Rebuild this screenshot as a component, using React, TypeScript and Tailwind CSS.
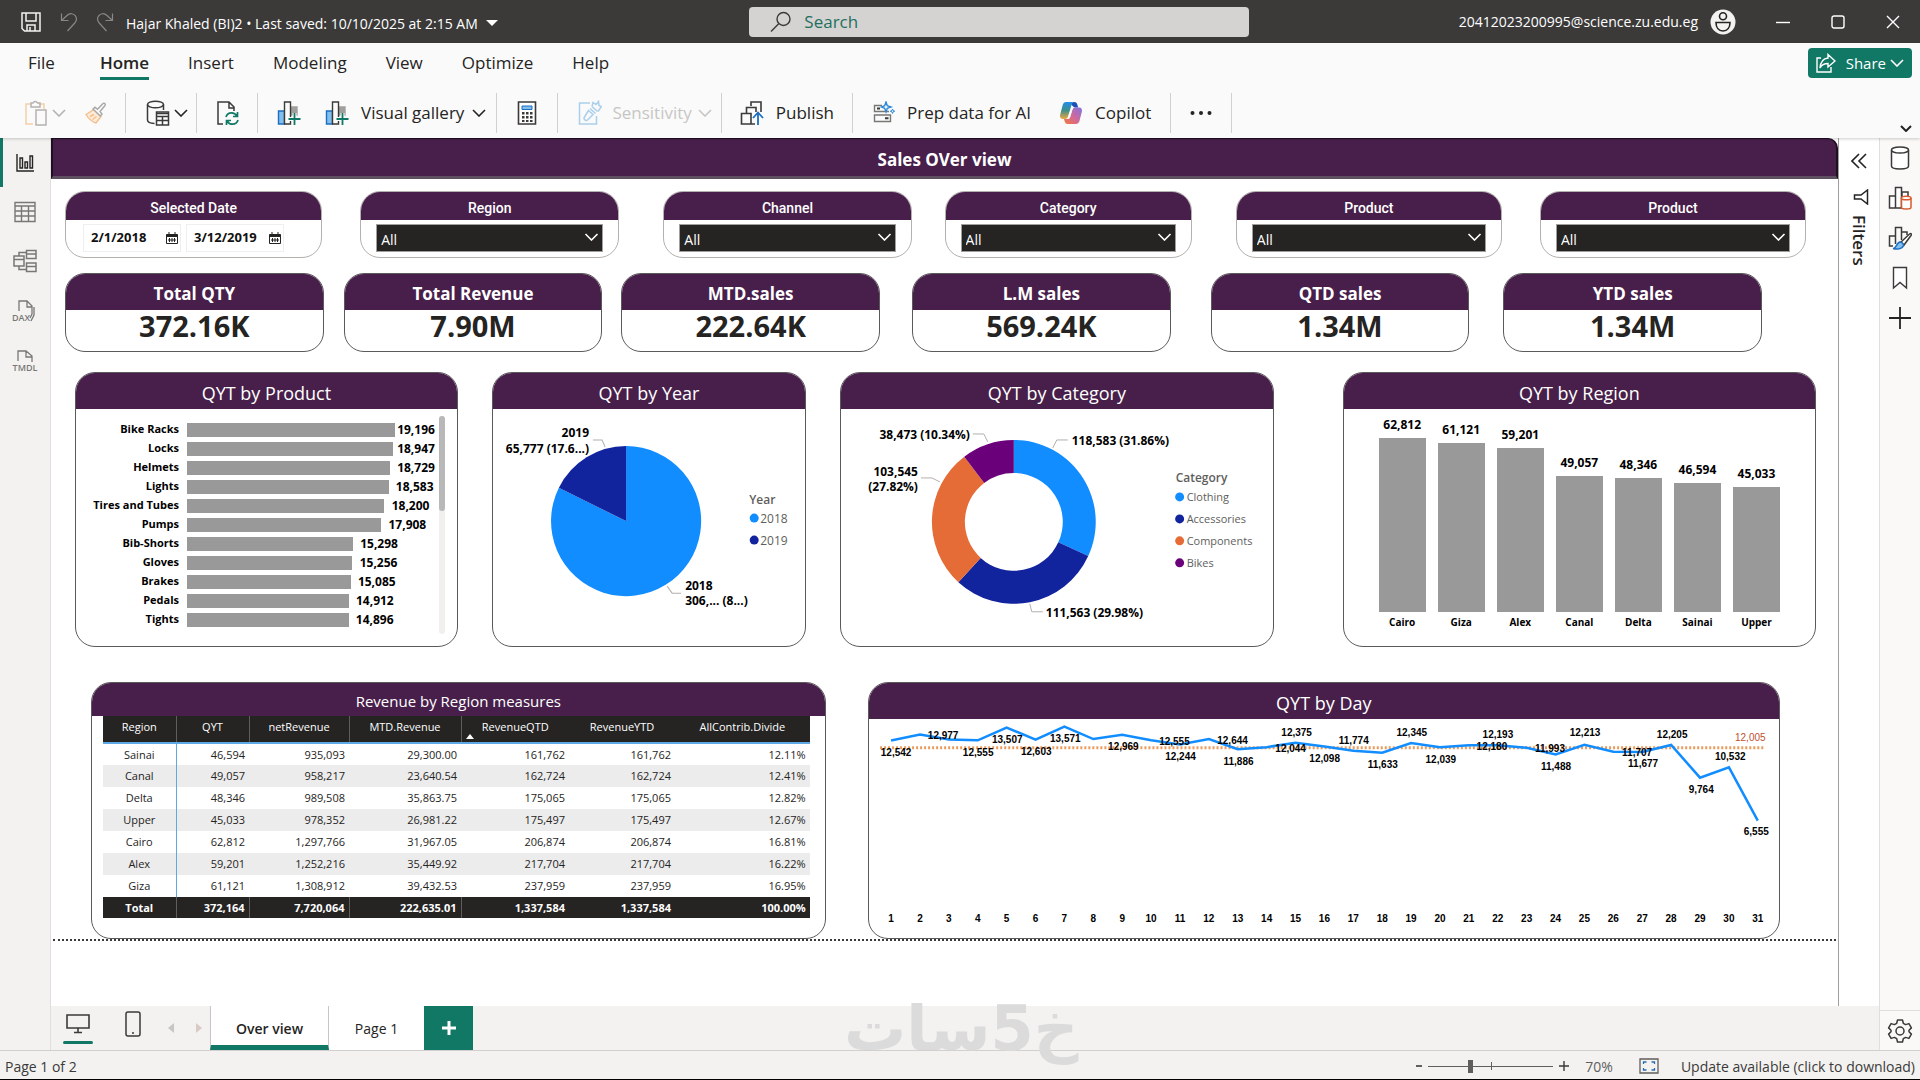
import React from 'react';

type IconProps = { className?: string };

const slicers = [
  { id: 'region', title: 'Region', box: 'flex-[259] ml-[38px]' },
  { id: 'channel', title: 'Channel', box: 'flex-[248] ml-[44px]' },
  { id: 'category', title: 'Category', box: 'flex-[247] ml-[33px]' },
  { id: 'product', title: 'Product', box: 'flex-[266] ml-[44px]' },
  { id: 'product-2', title: 'Product', box: 'flex-[266] ml-[38px]' },
];

const kpis = [
  { title: 'Total QTY', value: '372.16K', box: 'flex-1' },
  { title: 'Total Revenue', value: '7.90M', box: 'flex-1 ml-[20px]' },
  { title: 'MTD.sales', value: '222.64K', box: 'flex-1 ml-[19px]' },
  { title: 'L.M sales', value: '569.24K', box: 'flex-1 ml-[32px]' },
  { title: 'QTD sales', value: '1.34M', box: 'flex-1 ml-[40px]' },
  { title: 'YTD sales', value: '1.34M', box: 'flex-1 ml-[34px]' },
];

const products = [
  { name: 'Bike Racks', qty: 19196 },
  { name: 'Locks', qty: 18947 },
  { name: 'Helmets', qty: 18729 },
  { name: 'Lights', qty: 18583 },
  { name: 'Tires and Tubes', qty: 18200 },
  { name: 'Pumps', qty: 17908 },
  { name: 'Bib-Shorts', qty: 15298 },
  { name: 'Gloves', qty: 15256 },
  { name: 'Brakes', qty: 15085 },
  { name: 'Pedals', qty: 14912 },
  { name: 'Tights', qty: 14896 },
];

const regions = [
  { name: 'Cairo', qty: 62812 },
  { name: 'Giza', qty: 61121 },
  { name: 'Alex', qty: 59201 },
  { name: 'Canal', qty: 49057 },
  { name: 'Delta', qty: 48346 },
  { name: 'Sainai', qty: 46594 },
  { name: 'Upper', qty: 45033 },
];

const columns = ['Region', 'QYT', 'netRevenue', 'MTD.Revenue', 'RevenueQTD', 'RevenueYTD', 'AllContrib.Divide'];

const rows = [
  ['Sainai', '46,594', '935,093', '29,300.00', '161,762', '161,762', '12.11%'],
  ['Canal', '49,057', '958,217', '23,640.54', '162,724', '162,724', '12.41%'],
  ['Delta', '48,346', '989,508', '35,863.75', '175,065', '175,065', '12.82%'],
  ['Upper', '45,033', '978,352', '26,981.22', '175,497', '175,497', '12.67%'],
  ['Cairo', '62,812', '1,297,766', '31,967.05', '206,874', '206,874', '16.81%'],
  ['Alex', '59,201', '1,252,216', '35,449.92', '217,704', '217,704', '16.22%'],
  ['Giza', '61,121', '1,308,912', '39,432.53', '237,959', '237,959', '16.95%'],
];

const total = ['Total', '372,164', '7,720,064', '222,635.01', '1,337,584', '1,337,584', '100.00%'];

const days = [
  12542, 12977, 12620, 12555, 13507, 12603, 13571, 12650, 12969, 12555, 12244, 12644, 11886, 12044, 12375, 12098,
  11774, 11633, 12345, 12039, 12180, 12193, 11993, 11488, 12213, 11707, 11677, 12205, 9764, 10532, 6555,
];

// value, x, y
const dayLabels: [number, number, number][] = [
  [12542, 27, 34], [12977, 74, 17], [12555, 109, 34], [13507, 138, 21], [12603, 167, 33], [13571, 196, 20],
  [12969, 254, 28], [12555, 305, 23], [12244, 311, 38], [12644, 363, 22], [11886, 369, 43], [12375, 427, 14],
  [12044, 421, 30], [12098, 455, 40], [11774, 484, 22], [11633, 513, 46], [12345, 542, 14], [12039, 571, 41],
  [12180, 622, 28], [12193, 628, 16], [11993, 680, 30], [11488, 686, 48], [12213, 715, 14], [11707, 767, 34],
  [11677, 773, 45], [12205, 802, 16], [9764, 831, 71], [10532, 860, 38], [6555, 886, 113],
];

const fmt = (n: number) => n.toLocaleString('en-US');

/* ---------- icons ---------- */

const Chevron = ({ className = 'w-[14px] h-[8px]' }: IconProps) => (
  <svg viewBox="0 0 14 8" className={className} fill="none" stroke="currentColor" strokeWidth="1.6">
    <path d="M1 1l6 6 6-6" />
  </svg>
);

const SaveIcon = () => (
  <svg viewBox="0 0 20 20" className="w-5 h-5" fill="none" stroke="#f3f2f1" strokeWidth="1.5">
    <path d="M1 1h18v18H3.500L1 16.500zM5 1v8h10V1M6 19v-6h8v6M9 15v4" />
  </svg>
);

const UndoIcon = ({ className = '' }: IconProps) => (
  <svg viewBox="0 0 18 20" className={`w-[18px] h-5 ${className}`} fill="none" stroke="#8a8886" strokeWidth="1.2">
    <path d="M1.500 1.500v7h7M1.500 8.500L7 3.500c3-2.800 6.500-2 8.200.2 1.700 2.200 1.600 5-.4 7.300L7.500 19" />
  </svg>
);

const PasteIcon = () => (
  <svg viewBox="0 0 24 26" className="w-6 h-[26px]" fill="none" strokeWidth="1.5">
    <path d="M7 4H2v20h7M15 4h5v5" stroke="#f3cfa8" />
    <path d="M7 3h2a2.500 2.500 0 0 1 4.500 0H16v4H7z" stroke="#b5b3b1" />
    <path d="M12 10h10v15H12z" stroke="#b5b3b1" fill="#fafafa" />
  </svg>
);

const BrushIcon = () => (
  <svg viewBox="0 0 24 24" className="w-6 h-6" fill="none" strokeWidth="1.4">
    <path d="M3 13.500l8-5 7 7-5 6.500c-3-1-7-3.500-10-8.500z" fill="#fdebd6" stroke="#f3bf8d" />
    <path d="M7 15.500l4-2M9.500 18.500l4-3" stroke="#f3bf8d" />
    <path d="M10 8l2-1.800 2.500 2L20 2.500c1.200-1 3 .6 2 2L17 10.500l2 2.700-1.800 1.800z" fill="#fafafa" stroke="#a9a7a5" />
  </svg>
);

const DataIcon = () => (
  <svg viewBox="0 0 24 26" className="w-6 h-[26px]" fill="none" stroke="#3b3a39" strokeWidth="1.5">
    <ellipse cx="9.500" cy="4.500" rx="8" ry="3.300" />
    <path d="M1.500 4.500V20c0 2 3 3.300 7 3.500M17.500 4.500V10" />
    <path d="M10.500 12h12v13h-12z" fill="#fff" />
    <path d="M10.500 13.500h12M10.500 16.500h12M10.500 20.500h12M16.500 16v9" />
  </svg>
);

const RefreshFileIcon = () => (
  <svg viewBox="0 0 24 26" className="w-6 h-[26px]" fill="none" strokeWidth="1.5">
    <path d="M7 24H2V2h11l5 5v4M13 2v6h5" stroke="#3b3a39" />
    <path d="M10 17c.8-3 3-4.200 5.500-4.200 2.300 0 4.300 1.200 5.500 3.200M21.500 12v4.500H17M22 20c-.8 3-3 4.200-5.500 4.200-2.300 0-4.300-1.200-5.500-3.200M10.500 25v-4.500H15" stroke="#117865" strokeWidth="1.700" />
  </svg>
);

const NewVisualIcon = () => (
  <svg viewBox="0 0 24 26" className="w-6 h-[26px]" fill="none" strokeWidth="1.4">
    <path d="M1.500 11h6v13h-6z" fill="#83beec" stroke="#1b6ec2" />
    <path d="M14 7h6v8h-6z" fill="#a19f9d" stroke="#a19f9d" />
    <path d="M7.500 2h6v22h-6z" fill="#fafafa" stroke="#3b3a39" />
    <path d="M17.500 13v12M11.500 19h12" stroke="#fafafa" strokeWidth="4" />
    <path d="M17.500 13v12M11.500 19h12" stroke="#117865" strokeWidth="1.800" />
  </svg>
);

const CalcIcon = () => (
  <svg viewBox="0 0 20 26" className="w-5 h-[26px]">
    <path d="M1.500 2h17v22h-17z" fill="#fff" stroke="#3b3a39" strokeWidth="1.600" />
    <path d="M5 6h10v3.500H5z" fill="#83beec" stroke="#1b6ec2" />
    <path d="M5 12h2.500v2.500H5zM9 12h2.500v2.500H9zM13 12h2.500v2.500H13zM5 16h2.500v2.500H5zM9 16h2.500v2.500H9zM13 16h2.500v2.500H13zM5 20h2.500v2H5zM9 20h2.500v2H9zM13 20h2.500v2H13z" fill="#3b3a39" />
  </svg>
);

const SensitivityIcon = () => (
  <svg viewBox="0 0 24 26" className="w-6 h-[26px]" fill="none" stroke="#a9cfec" strokeWidth="1.500">
    <path d="M12 3H1.500v21h17v-8" />
    <path d="M10.500 10.500l4.500 4-5.500 5.500c-2 1.500-4.500-1-3-3zM12 8.500l5.500 5M14 6.500l5.500 5M14 6.500l1-4 3 2 2.500-3 .5 4 2.500 1-3.500 5" />
  </svg>
);

const PublishIcon = () => (
  <svg viewBox="0 0 24 26" className="w-6 h-[26px]" fill="none" stroke="#3b3a39" strokeWidth="1.600">
    <path d="M11 6V2h10v10M6.500 13V7.500H16V12M1.500 13.500H11V24H1.500zM11 24h4" />
    <path d="M18 25V13M13 18l5-5.500 5 5.500" stroke="#1b6ec2" strokeWidth="1.800" />
  </svg>
);

const PrepIcon = () => (
  <svg viewBox="0 0 22 24" className="w-[22px] h-6" fill="none" strokeWidth="1.400">
    <path d="M9 4.500H1.500v6H16M1.500 14h16v6.500h-16z" stroke="#797775" />
    <path d="M4 7.500h3M12 17.300h3.500" stroke="#3b3a39" strokeWidth="2" />
    <path d="M13 1l1.300 3.700L18 6l-3.700 1.300L13 11l-1.300-3.700L8.500 6l3.200-1.300z" stroke="#2b88d8" fill="#fafafa" />
    <path d="M19.500 8l.6 1.600 1.600.6-1.600.6-.6 1.600-.6-1.600-1.600-.6 1.600-.6z" stroke="#2b88d8" strokeWidth="1" />
  </svg>
);

const CopilotIcon = () => (
  <svg viewBox="0 0 24 24" className="w-6 h-6">
    <defs>
      <linearGradient id="cp-a" x1="0" y1="0" x2="0" y2="1">
        <stop offset="0" stopColor="#1f8de8" />
        <stop offset=".5" stopColor="#3f8f8a" />
        <stop offset="1" stopColor="#f0a83c" />
      </linearGradient>
      <linearGradient id="cp-b" x1="1" y1="0" x2="0" y2="1">
        <stop offset="0" stopColor="#7f74e0" />
        <stop offset=".5" stopColor="#d0689c" />
        <stop offset="1" stopColor="#f4793b" />
      </linearGradient>
    </defs>
    <path d="M15 1h.5c1.500 0 2.300 1 2.800 2.500l.9 3h-4l-3-3C12.500 2 13.500 1 15 1z" fill="#1d4fb8" />
    <path d="M17 23H8.500c-1.500 0-2.300-1-2.800-2.500L5 18h3.500c1.500 0 2.300-.8 2.800-2.500l2-6.500c.5-1.800 1.500-2.500 3-2.500H20c2.500 0 3.500 2 2.800 4.500l-2.500 9.500C19.700 22 18.500 23 17 23z" fill="url(#cp-b)" />
    <path d="M7 1h8.500c-1.500 0-2.300 1-2.800 2.500L9 15.500c-.5 1.800-1.500 2.500-3 2.500H4c-2.500 0-3.500-2-2.800-4.500l2.500-9.500C4.300 2 5.500 1 7 1z" fill="url(#cp-a)" />
    <path d="M12.500 6.500h3.200c-1.300 0-2 .9-2.400 2.500l-2 6.500c-.5 1.700-1.300 2.500-2.800 2.500H7.300c1-.4 1.500-1.300 1.900-2.500z" fill="#fafafa" />
  </svg>
);

const CalendarIcon = () => (
  <svg viewBox="0 0 12 12" className="w-3 h-3" fill="none" stroke="#252423">
    <path d="M.5 2.500h11v9H.5zM3 0v3M9 0v3M.5 4.500h11M3.500 6v4M6 6v4M8.500 6v4M2 8h8" />
    <path d="M.5 3.500h11" strokeWidth="2" />
  </svg>
);

/* ---------- pieces ---------- */

const Divider = () => <span className="w-px h-10 bg-[#d2d0ce]" />;

function TitleBar() {
  return (
    <header className="flex items-center h-[43px] bg-[#3b3a39] text-white">
      <div className="flex items-center flex-[750] pl-[21px]">
        <button aria-label="Save"><SaveIcon /></button>
        <button aria-label="Undo" className="ml-[19px]"><UndoIcon /></button>
        <button aria-label="Redo" className="ml-[18px]"><UndoIcon className="-scale-x-100" /></button>
        <button className="flex items-center gap-2 ml-3 pt-[3px] text-[14px] whitespace-nowrap">
          Hajar Khaled (BI)2 • Last saved: 10/10/2025 at 2:15 AM
          <svg viewBox="0 0 12 6" className="w-3 h-[6px]" fill="#fff"><path d="M0 0h12L6 6z" /></svg>
        </button>
      </div>
      <label className="flex items-center w-[500px] h-[30px] pl-[21px] gap-3 rounded-sm bg-[#d4d3d1]">
        <svg viewBox="0 0 22 22" className="w-[22px] h-[22px]" fill="none" stroke="#3b3a39" strokeWidth="1.4">
          <circle cx="13.500" cy="8" r="6.500" />
          <path d="M8.700 12.700L1 20.500" />
        </svg>
        <input type="text" aria-label="Search" placeholder="Search" className="flex-1 text-[17px] bg-transparent outline-none placeholder:text-[#1f6f5f] placeholder:opacity-100" />
      </label>
      <div className="flex items-center justify-end flex-[670] pr-[20px]">
        <span className="text-[14px]">20412023200995@science.zu.edu.eg</span>
        <svg viewBox="0 0 26 26" className="w-[26px] h-[26px] ml-3" fill="none" stroke="#252423" strokeWidth="1.600">
          <circle cx="13" cy="13" r="12.500" fill="#f3f2f1" stroke="none" />
          <circle cx="13" cy="7.300" r="3.500" />
          <path d="M6 13.500h14c0 5-2.500 8.500-7 8.500s-7-3.500-7-8.500z" />
        </svg>
        <button aria-label="Minimize" className="ml-10">
          <svg viewBox="0 0 14 14" className="w-[14px] h-[14px]" stroke="#fff" strokeWidth="1.400"><path d="M0 7.500h14" /></svg>
        </button>
        <button aria-label="Maximize" className="ml-[41px]">
          <svg viewBox="0 0 14 14" className="w-[14px] h-[14px]" fill="none" stroke="#fff" strokeWidth="1.400"><rect x="1" y="1" width="12" height="12" rx="2" /></svg>
        </button>
        <button aria-label="Close" className="ml-[41px]">
          <svg viewBox="0 0 14 14" className="w-[14px] h-[14px]" stroke="#fff" strokeWidth="1.400"><path d="M1 1l12 12M13 1L1 13" /></svg>
        </button>
      </div>
    </header>
  );
}

function Ribbon() {
  return (
    <div className="relative z-10 bg-[#fafafa] shadow-[0_1px_3px_rgba(0,0,0,0.2)]">
      <nav className="flex items-center justify-between h-10 pl-7 pr-2 text-[17px] text-[#252423]">
        <div className="flex gap-[39px]">
          <a href="#file" className="mr-[6px]">File</a>
          <a href="#home" className="relative font-semibold after:absolute after:inset-x-0 after:-bottom-1 after:h-[3px] after:bg-[#117865]">Home</a>
          <a href="#insert">Insert</a>
          <a href="#modeling">Modeling</a>
          <a href="#view">View</a>
          <a href="#optimize">Optimize</a>
          <a href="#help">Help</a>
        </div>
        <button className="flex items-center h-[30px] gap-1 px-2 rounded-[4px] bg-[#117865] text-white text-[15px]">
          <svg viewBox="0 0 20 20" className="w-5 h-5 mr-[6px]" fill="none" stroke="#fff" strokeWidth="1.400">
            <path d="M5 5H1v14h14v-5M12 5V1.500l7 6.500-7 6V10.500c-4 0-6.500 1.500-8 4.500.5-6 3.500-9.500 8-10z" />
          </svg>
          Share
          <Chevron />
        </button>
      </nav>
      <div className="flex items-center justify-between h-[55px] pr-2 pl-6 text-[17px] text-[#252423]">
        <div className="flex items-center h-10 mt-[5px] whitespace-nowrap">
          <button aria-label="Paste" className="flex items-center gap-1 text-[#b5b3b1]"><PasteIcon /><Chevron /></button>
          <button aria-label="Format painter" className="ml-[17px] mr-[18px]"><BrushIcon /></button>
          <Divider />
          <button aria-label="Get data" className="flex items-center gap-1 ml-5 mr-2"><DataIcon /><Chevron /></button>
          <Divider />
          <button aria-label="Refresh" className="ml-[19px] mr-[17px]"><RefreshFileIcon /></button>
          <Divider />
          <button aria-label="New visual" className="ml-[19px] mr-6"><NewVisualIcon /></button>
          <button className="flex items-center gap-3 mr-[10px]"><NewVisualIcon />Visual gallery<Chevron className="w-[14px] h-[8px] -ml-1" /></button>
          <Divider />
          <button aria-label="Quick measure" className="mx-5"><CalcIcon /></button>
          <Divider />
          <button className="flex items-center gap-[10px] ml-5 mr-[9px] text-[#c8c6c4]"><SensitivityIcon />Sensitivity<Chevron className="w-[14px] h-[8px] -ml-1" /></button>
          <Divider />
          <button className="flex items-center gap-3 mx-[18px]"><PublishIcon />Publish</button>
          <Divider />
          <button className="flex items-center gap-3 ml-5 mr-7"><PrepIcon />Prep data for AI</button>
          <button className="flex items-center gap-3 mr-[19px]"><CopilotIcon />Copilot</button>
          <Divider />
          <button aria-label="More options" className="mx-[19px]">
            <svg viewBox="0 0 22 6" className="w-[22px] h-[6px]" fill="#252423"><circle cx="2.500" cy="3" r="2" /><circle cx="11" cy="3" r="2" /><circle cx="19.500" cy="3" r="2" /></svg>
          </button>
          <Divider />
        </div>
        <button aria-label="Collapse ribbon" className="self-end mb-[6px]">
          <svg viewBox="0 0 12 7" className="w-3 h-[7px]" fill="none" stroke="#252423" strokeWidth="2"><path d="M1 1l5 5 5-5" /></svg>
        </button>
      </div>
    </div>
  );
}

function ViewRail() {
  return (
    <aside className="flex flex-col w-[51px] border-r border-[#e1dfdd] bg-[#f3f2f1]">
      <button aria-label="Report view" className="flex items-center justify-center h-[49px] pr-1 border-l-[3px] border-[#117865]">
        <svg viewBox="0 0 18 18" className="w-[18px] h-[18px]" fill="none" stroke="#252423" strokeWidth="1.400">
          <path d="M1 0v17h17M4 4h2.500v10H4zM9 8h2.500v6H9zM14 2h2.500v12H14z" />
        </svg>
      </button>
      <button aria-label="Table view" className="flex items-center justify-center h-[49px]">
        <svg viewBox="0 0 22 22" className="w-[22px] h-[22px]" fill="none" stroke="#797775" strokeWidth="1.400">
          <path d="M1 1.500h20v19H1zM1 5h20M1 10h20M1 15h20M7.500 5v15.500M14.500 5v15.500" />
        </svg>
      </button>
      <button aria-label="Model view" className="flex items-center justify-center h-[50px]">
        <svg viewBox="0 0 24 24" className="w-6 h-6" fill="none" stroke="#797775" strokeWidth="1.500">
          <path d="M1 7h10v10H1zM1 10.500h10M13.500 1.500H23v8h-9.500zM13.500 5H23M13.500 14H23v8.500h-9.500zM13.500 17.500H23M6 7V3.500h7.500M6 17v3.500h7.500" />
        </svg>
      </button>
      <button aria-label="DAX query view" className="flex items-center justify-center h-[50px]">
        <svg viewBox="0 0 26 24" className="w-[26px] h-6" fill="none" stroke="#797775" strokeWidth="1.300">
          <path d="M7 12V2h8l5 5v8l-2 4M15 2v6h5M22 8v8l-3 6" />
          <text x="0" y="22" fontSize="9" fontFamily="Open Sans" fontWeight="600" fill="#797775" stroke="none">DAX</text>
        </svg>
      </button>
      <button aria-label="TMDL view" className="flex items-center justify-center h-[50px]">
        <svg viewBox="0 0 26 24" className="w-[26px] h-6" fill="none" stroke="#797775" strokeWidth="1.300">
          <path d="M6 12V2h8l6 5v6M14 2v6h6" />
          <text x="13" y="22" textAnchor="middle" fontSize="9" fontFamily="Open Sans" fontWeight="600" fill="#797775" stroke="none">TMDL</text>
        </svg>
      </button>
    </aside>
  );
}

function Card({ title, box, head = 'h-[36px] pt-1 text-[18px]', children }: { title: string; box: string; head?: string; children: React.ReactNode }) {
  return (
    <section className={`overflow-hidden rounded-[20px] border border-[#5a5a5a] bg-white ${box}`}>
      <h2 className={`flex items-center justify-center bg-[#481f4b] text-white ${head}`}>{title}</h2>
      {children}
    </section>
  );
}

function Slicers() {
  return (
    <div className="flex pl-[14px] pr-8 mt-3">
      <section className="flex-[257] h-[67px] overflow-hidden rounded-[20px] border border-[#b3b0ad] bg-white">
        <h2 className="flex items-center justify-center h-[28px] pt-1 bg-[#481f4b] text-white text-[14px] font-medium font-['Roboto',sans-serif]">Selected Date</h2>
        <div className="flex gap-[5px] pl-[17px] mt-1">
          {['2/1/2018', '3/12/2019'].map((d, i) => (
            <label key={d} className="flex items-center w-[98px] h-7 border border-[#f0efee]">
              <input type="text" aria-label={i ? 'End date' : 'Start date'} defaultValue={d} className="w-[74px] pl-[7px] mr-2 text-[13px] font-bold text-[#111] bg-transparent outline-none" />
              <CalendarIcon />
            </label>
          ))}
        </div>
      </section>
      {slicers.map((s) => (
        <section key={s.id} className={`h-[67px] overflow-hidden rounded-[20px] border border-[#b3b0ad] bg-white ${s.box}`}>
          <h2 className="flex items-center justify-center h-[28px] pt-1 bg-[#481f4b] text-white text-[14px] font-medium font-['Roboto',sans-serif]">
            <label htmlFor={s.id}>{s.title}</label>
          </h2>
          <div className="relative mx-[15px] mt-1 text-white">
            <select id={s.id} className="block w-full h-7 pl-1 pt-[2px] text-[14px] appearance-none border border-[#a19f9d] bg-[#252423] outline-none">
              <option>All</option>
            </select>
            <Chevron className="absolute right-1 top-[9px] w-[15px] h-[8px] pointer-events-none" />
          </div>
        </section>
      ))}
    </div>
  );
}

function ProductChart() {
  return (
    <div className="flex pl-[7px] pr-3 pt-[7px]">
      <ul className="flex-1 pt-1 text-[11px] font-bold text-black">
        {products.map((p) => (
          <li key={p.name} className="flex items-center h-[19px]">
            <span className="w-24 pr-2 shrink-0 text-right whitespace-nowrap box-content">{p.name}</span>
            <span className="flex items-center flex-1">
              <span className="h-[14px] shrink-0 bg-[#999999]" style={{ width: `${(p.qty / 19196) * 84}%` }} />
              <span className="flex-1 max-w-[45px] text-right text-[12px]">{fmt(p.qty)}</span>
            </span>
          </li>
        ))}
      </ul>
      <div className="w-[6px] h-[218px] ml-1 rounded-full bg-[#f1f0ef]">
        <div className="h-[95px] rounded-full bg-[#b8b8b8]" />
      </div>
    </div>
  );
}

// ring or pie slice, from and to are shares of the whole turn
function slice(cx: number, cy: number, r: number, inner: number, from: number, to: number) {
  const at = (rad: number, t: number) => {
    const a = t * 2 * Math.PI;
    return `${(cx + rad * Math.sin(a)).toFixed(2)} ${(cy - rad * Math.cos(a)).toFixed(2)}`;
  };
  const large = to - from > 0.5 ? 1 : 0;
  return `M${at(r, from)}A${r} ${r} 0 ${large} 1 ${at(r, to)}L${at(inner, to)}A${inner} ${inner} 0 ${large} 0 ${at(inner, from)}Z`;
}

function YearChart() {
  return (
    <svg viewBox="0 0 312 236" className="block w-full font-bold text-[12px]">
      <path d={slice(133, 112, 75, 0, 0, 0.8233)} fill="#118dff" />
      <path d={slice(133, 112, 75, 0, 0.8233, 1)} fill="#12239e" />
      <path d="M100 31h9l3 7M174 177l5 7h9" fill="none" stroke="#b3b0ad" />
      <text x="96" y="28" textAnchor="end">2019</text>
      <text x="96" y="44" textAnchor="end">65,777 (17.6...)</text>
      <text x="192" y="181">2018</text>
      <text x="192" y="196">306,... (8...)</text>
      <text x="256" y="95" fill="#605e5c" fontWeight="600">Year</text>
      <g fill="#605e5c" fontWeight="400">
        <circle cx="261" cy="109" r="4.500" fill="#118dff" />
        <text x="267" y="114">2018</text>
        <circle cx="261" cy="131" r="4.500" fill="#12239e" />
        <text x="267" y="136">2019</text>
      </g>
    </svg>
  );
}

function CategoryChart() {
  const legend = [
    ['Clothing', '#118dff'],
    ['Accessories', '#12239e'],
    ['Components', '#e66c37'],
    ['Bikes', '#6b007b'],
  ];
  const stops = [0, 0.3186, 0.6184, 0.8966, 1];
  return (
    <svg viewBox="0 0 432 236" className="block w-full font-bold text-[12px]">
      {legend.map(([name, color], i) => (
        <path key={name} d={slice(173, 113, 82, 49, stops[i], stops[i + 1])} fill={color} />
      ))}
      <path d="M132 25h11l4 8M227 31h-11l-4 8M80 69h11l8 4M189 195l2 8h11" fill="none" stroke="#b3b0ad" />
      <text x="129" y="30" textAnchor="end">38,473 (10.34%)</text>
      <text x="231" y="36">118,583 (31.86%)</text>
      <text x="77" y="67" textAnchor="end">103,545</text>
      <text x="77" y="82" textAnchor="end">(27.82%)</text>
      <text x="205" y="208">111,563 (29.98%)</text>
      <text x="335" y="73" fill="#605e5c" fontWeight="600">Category</text>
      {legend.map(([name, color], i) => (
        <g key={name} fill="#605e5c" fontWeight="400" className="text-[11px]">
          <circle cx="339" cy={88 + i * 22} r="4.500" fill={color} />
          <text x="346" y={92 + i * 22}>{name}</text>
        </g>
      ))}
    </svg>
  );
}

function RegionChart() {
  return (
    <ul className="flex items-end gap-3 h-[220px] px-[35px] text-center font-bold text-black">
      {regions.map((r) => (
        <li key={r.name} className="flex-1">
          <div className="mb-1 text-[12px] leading-[18px]">{fmt(r.qty)}</div>
          <div className="bg-[#999999]" style={{ height: `${Math.round((r.qty / 62812) * 174)}px` }} />
          <div className="mt-[3px] text-[10px] leading-[14px]">{r.name}</div>
        </li>
      ))}
    </ul>
  );
}

function RevenueTable() {
  return (
    <table className="w-[calc(100%-26px)] mx-[11px] table-fixed text-[11px] leading-4 text-[#252423]">
      <colgroup>
        <col className="w-[73px]" />
        <col className="w-[73px]" />
        <col className="w-[100px]" />
        <col className="w-[112px]" />
        <col className="w-[108px]" />
        <col className="w-[106px]" />
        <col />
      </colgroup>
      <thead>
        <tr className="h-[27px] align-top bg-[#252423] text-white border-b-2 border-[#5fa8e6]">
          {columns.map((c, i) => (
            <th key={c} className={`relative pt-[3px] font-normal ${i > 0 && i < 5 ? 'border-l border-[#605e5c]' : ''}`}>
              {c}
              {i === 4 && (
                <svg viewBox="0 0 8 5" className="absolute left-1 bottom-[3px] w-2 h-[5px]" fill="#fff"><path d="M4 0l4 5H0z" /></svg>
              )}
            </th>
          ))}
        </tr>
      </thead>
      <tbody>
        {rows.map((r) => (
          <tr key={r[0]} className="h-[22px] even:bg-[#ececec]">
            {r.map((v, i) => (
              <td key={i} className={i === 0 ? 'text-center border-r border-[#5fa8e6]' : 'text-right pr-1'}>{v}</td>
            ))}
          </tr>
        ))}
      </tbody>
      <tfoot>
        <tr className="h-[21px] bg-[#252423] text-white font-bold">
          {total.map((v, i) => (
            <td key={i} className={`${i === 0 ? 'text-center' : 'text-right pr-1'} ${i > 0 && i < 5 ? 'border-l border-[#605e5c]' : ''}`}>{v}</td>
          ))}
        </tr>
      </tfoot>
    </table>
  );
}

function DayChart() {
  const points = days.map((v, i) => `${(22 + i * 28.85).toFixed(1)},${(189 - v * 0.01336).toFixed(1)}`).join(' ');
  return (
    <svg viewBox="0 0 909 219" className="block w-full font-bold text-[10px] font-['Liberation_Sans',sans-serif]" textAnchor="middle">
      <path d="M11 28.600h884" stroke="#ec9a5c" strokeWidth="3" strokeDasharray="2 2" />
      <polyline points={points} fill="none" stroke="#118dff" strokeWidth="2.500" />
      {dayLabels.map(([v, x, y]) => (
        <text key={x} x={x} y={y + 3}>{fmt(v)}</text>
      ))}
      <text x="880" y="22" fill="#c0502f" fontWeight="400">12,005</text>
      {days.map((_, i) => (
        <text key={i} x={22 + i * 28.85} y="203">{i + 1}</text>
      ))}
    </svg>
  );
}

function Report() {
  return (
    <main className="flex flex-col flex-1 min-w-0 bg-white">
      <h1 className="flex items-center justify-center h-[41px] pt-1 border-2 border-t border-b-[3px] border-[#1c0f1e] border-b-[#5e5060] rounded-tr-[10px] bg-[#481f4b] text-white text-[17px] font-bold">Sales OVer view</h1>
      <Slicers />
      <div className="flex pl-[14px] pr-[76px] mt-[15px]">
        {kpis.map((k) => (
          <Card key={k.title} title={k.title} box={`h-[79px] ${k.box}`} head="h-[36px] pt-1 text-[17px] font-bold">
            <p className="text-center text-[29px] leading-[31px] font-bold text-[#252423]">{k.value}</p>
          </Card>
        ))}
      </div>
      <div className="flex pl-6 pr-[22px] mt-5">
        <Card title="QYT by Product" box="flex-[383] h-[275px]"><ProductChart /></Card>
        <Card title="QYT by Year" box="flex-[314] ml-[34px] h-[275px]"><YearChart /></Card>
        <Card title="QYT by Category" box="flex-[434] ml-[34px] h-[275px]"><CategoryChart /></Card>
        <Card title="QYT by Region" box="flex-[474] ml-[69px] h-[275px]"><RegionChart /></Card>
      </div>
      <div className="flex pl-[38px] pr-[56px] mx-[2px] mt-[35px] border-b-2 border-dotted border-[#3b3a39]">
        <Card title="Revenue by Region measures" box="flex-[734] h-[257px]" head="h-[33px] pt-1 text-[15px]"><RevenueTable /></Card>
        <Card title="QYT by Day" box="flex-[912] ml-[42px] h-[257px]"><DayChart /></Card>
      </div>
    </main>
  );
}

function PageTabs() {
  return (
    <div className="relative flex h-11 bg-[#f3f2f1] text-[14px] text-[#252423]">
      <button aria-label="Desktop layout" className="flex flex-col items-center justify-between w-[30px] ml-3 pt-2 pb-[6px]">
        <svg viewBox="0 0 24 20" className="w-6 h-5" fill="none" stroke="#3b3a39" strokeWidth="1.600">
          <path d="M1 1h22v13H1zM12 14v4M8 18.500h8" />
        </svg>
        <span className="w-full h-[3px] rounded-full bg-[#117865]" />
      </button>
      <button aria-label="Mobile layout" className="w-4 ml-8 pt-[5px] self-start">
        <svg viewBox="0 0 16 26" className="w-4 h-[26px]" fill="none" stroke="#3b3a39" strokeWidth="1.500">
          <rect x="1" y="1" width="14" height="24" rx="2" />
          <path d="M7 22h2" />
        </svg>
      </button>
      <button aria-label="Previous page" className="ml-[27px]"><svg viewBox="0 0 6 10" className="w-[6px] h-[10px]" fill="#c8c6c4"><path d="M6 0v10L0 5z" /></svg></button>
      <button aria-label="Next page" className="ml-[22px] mr-2"><svg viewBox="0 0 6 10" className="w-[6px] h-[10px]" fill="#d8cac4"><path d="M0 0v10l6-5z" /></svg></button>
      <button className="w-[119px] pt-[5px] border-x border-b-[5px] border-[#c8c6c4] border-b-[#117865] bg-white font-semibold">Over view</button>
      <button className="w-[95px] bg-white">Page 1</button>
      <button aria-label="New page" className="flex items-center justify-center w-[49px] bg-[#117865]">
        <svg viewBox="0 0 14 14" className="w-[14px] h-[14px]" stroke="#fff" strokeWidth="3"><path d="M7 0v14M0 7h14" /></svg>
      </button>
      <span dir="rtl" className="absolute left-[793px] -top-2 text-[62px] leading-[62px] font-bold text-[#dcdbdb] pointer-events-none font-['DejaVu_Sans',sans-serif]">خ5سات</span>
    </div>
  );
}

function FiltersPane() {
  return (
    <aside className="flex flex-col items-center w-[41px] pt-[15px] border-l border-[#a19f9d] bg-white text-[#252423]">
      <button aria-label="Expand filters">
        <svg viewBox="0 0 16 16" className="w-4 h-4" fill="none" stroke="currentColor" strokeWidth="1.600"><path d="M8 1L1 8l7 7M15 1L8 8l7 7" /></svg>
      </button>
      <svg viewBox="0 0 16 16" className="w-4 h-4 mt-5 ml-1" fill="none" stroke="currentColor" strokeWidth="1.500">
        <path d="M14.500 1v14L8 10H1.500V6H8z" />
      </svg>
      <span className="mt-[10px] text-[17px] font-semibold [writing-mode:vertical-rl]">Filters</span>
    </aside>
  );
}

function PaneRail() {
  return (
    <aside className="flex flex-col items-center justify-between w-[41px] border-l border-[#e1dfdd] bg-[#faf9f8]">
      <div className="flex flex-col items-center gap-4 pt-2">
        <button aria-label="Data">
          <svg viewBox="0 0 24 24" className="w-6 h-6" fill="#fff" stroke="#3b3a39" strokeWidth="1.500"><path d="M3.500 4v16c0 4 17 4 17 0V4" /><ellipse cx="12" cy="4" rx="8.500" ry="3" /></svg>
        </button>
        <button aria-label="Build">
          <svg viewBox="0 0 24 24" className="w-6 h-6" fill="#fff" stroke="#3b3a39" strokeWidth="1.500">
            <path d="M1.500 10h6v12h-6zM14 6h6v8h-6zM7.500 1.500h6V22h-6z" />
            <path d="M13.500 12v9.500c0 2 9.500 2 9.500 0V12" stroke="#d9582b" /><ellipse cx="18.200" cy="12" rx="4.800" ry="1.800" stroke="#d9582b" />
          </svg>
        </button>
        <button aria-label="Format">
          <svg viewBox="0 0 24 24" className="w-6 h-6" fill="none" stroke="#3b3a39" strokeWidth="1.500">
            <path d="M5 20H1.500V10h6V1.500h6V14M7.500 10v8M13.500 6H19v3" />
            <path d="M13 16l8.500-8c1.500-1 2.500 0 1.500 1.500L16 19z" fill="#fff" />
            <path d="M5 22.500c3 .5 3-5 6.500-6.500 2 0 4 1.500 4 3.500-1.500 4-7 4-10.500 3z" fill="#83beec" stroke="#1b6ec2" />
          </svg>
        </button>
        <button aria-label="Bookmarks">
          <svg viewBox="0 0 24 24" className="w-6 h-6" fill="#fff" stroke="#3b3a39" strokeWidth="1.400"><path d="M5.500 1.500h13V22L12 16.500 5.500 22z" /></svg>
        </button>
        <button aria-label="Add pane">
          <svg viewBox="0 0 24 24" className="w-6 h-6" stroke="#252423" strokeWidth="1.800"><path d="M12 1v22M1 12h22" /></svg>
        </button>
      </div>
      <button aria-label="Settings" className="flex items-center justify-center w-full h-10 border-t border-[#e1dfdd]">
        <svg viewBox="0 0 26 26" className="w-[26px] h-[26px]" fill="none" stroke="#3b3a39" strokeWidth="1.500" strokeLinejoin="round">
          <circle cx="13" cy="13" r="4" />
          <path d="M10.500 2h5l.8 3.300 2.300 1.300 3.300-1 2.500 4.300L22 12.300v1.400l2.400 2.400-2.500 4.300-3.300-1-2.300 1.300-.8 3.300h-5l-.8-3.300-2.300-1.300-3.300 1-2.500-4.300L4 13.700v-1.400L1.600 9.900l2.500-4.300 3.300 1 2.300-1.300z" />
        </svg>
      </button>
    </aside>
  );
}

function StatusBar() {
  return (
    <footer className="flex items-center justify-between h-[30px] px-[5px] pt-[2px] border-t border-t-[#d2d0ce] border-b border-b-black bg-[#f3f2f1] text-[14px] text-[#3b3a39]">
      <span>Page 1 of 2</span>
      <div className="flex items-center">
        <button aria-label="Zoom out"><svg viewBox="0 0 6 10" className="w-[6px] h-[10px]" stroke="#3b3a39" strokeWidth="1.600"><path d="M0 5h6" /></svg></button>
        <div className="relative flex items-center w-[125px] mx-[6px]">
          <span className="absolute left-1/2 w-px h-2 bg-[#605e5c]" />
          <input
            type="range"
            aria-label="Zoom"
            defaultValue={33}
            className="w-full h-px appearance-none bg-[#605e5c] [&::-webkit-slider-thumb]:appearance-none [&::-webkit-slider-thumb]:w-[5px] [&::-webkit-slider-thumb]:h-[13px] [&::-webkit-slider-thumb]:bg-[#605e5c]"
          />
        </div>
        <button aria-label="Zoom in"><svg viewBox="0 0 10 10" className="w-[10px] h-[10px]" stroke="#3b3a39" strokeWidth="1.400"><path d="M0 5h10M5 0v10" /></svg></button>
        <span className="ml-4 text-[#605e5c]">70%</span>
        <button aria-label="Fit to page" className="ml-[26px]">
          <svg viewBox="0 0 20 16" className="w-5 h-4" fill="none" stroke="#605e5c" strokeWidth="1.300">
            <path d="M1 1h18v14H1z" />
            <path d="M4.500 6V4h3M12.500 4h3v2M15.500 10v2h-3M7.500 12h-3v-2" stroke="#2b6cb0" />
          </svg>
        </button>
        <a href="#update" className="ml-[22px] whitespace-nowrap">Update available (click to download)</a>
      </div>
    </footer>
  );
}

export default function App() {
  return (
    <div className="flex flex-col min-h-screen bg-white font-['Open_Sans','Segoe_UI',sans-serif]">
      <TitleBar />
      <Ribbon />
      <div className="flex flex-1">
        <ViewRail />
        <div className="flex flex-col flex-1 min-w-0">
          <div className="flex flex-1">
            <Report />
            <FiltersPane />
          </div>
          <PageTabs />
        </div>
        <PaneRail />
      </div>
      <StatusBar />
    </div>
  );
}
